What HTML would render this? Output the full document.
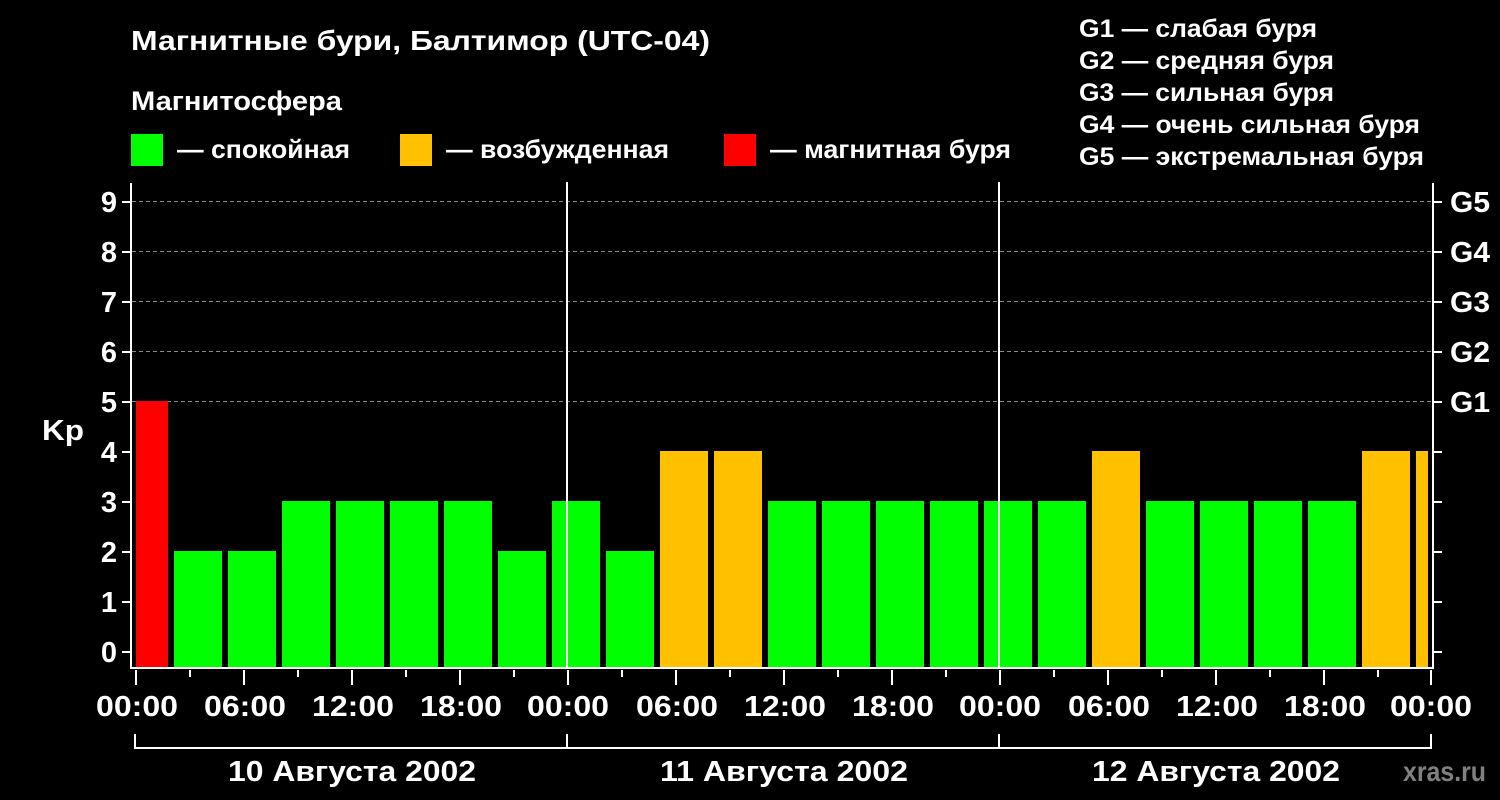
<!DOCTYPE html>
<html><head><meta charset="utf-8"><style>
html,body{margin:0;padding:0;background:#000;width:1500px;height:800px;overflow:hidden}
svg{display:block}
text{font-family:"Liberation Sans",Arial,sans-serif;font-weight:bold;fill:#fff}
</style></head><body>
<svg width="1500" height="800" viewBox="0 0 1500 800" xmlns="http://www.w3.org/2000/svg">
<rect width="1500" height="800" fill="#000"/>
<text x="131" y="50" font-size="28" textLength="579" lengthAdjust="spacingAndGlyphs">Магнитные бури, Балтимор (UTC-04)</text>
<text x="131" y="110" font-size="27" textLength="211" lengthAdjust="spacingAndGlyphs">Магнитосфера</text>
<rect x="131" y="134" width="32" height="32" fill="#00ff00"/>
<text x="177" y="158" font-size="26" textLength="173" lengthAdjust="spacingAndGlyphs">— спокойная</text>
<rect x="400" y="134" width="32" height="32" fill="#ffc000"/>
<text x="446" y="158" font-size="26" textLength="223" lengthAdjust="spacingAndGlyphs">— возбужденная</text>
<rect x="724" y="134" width="32" height="32" fill="#ff0000"/>
<text x="770" y="158" font-size="26" textLength="241" lengthAdjust="spacingAndGlyphs">— магнитная буря</text>
<g font-size="25">
<text x="1079" y="37" textLength="238" lengthAdjust="spacingAndGlyphs">G1 — слабая буря</text>
<text x="1079" y="69" textLength="255" lengthAdjust="spacingAndGlyphs">G2 — средняя буря</text>
<text x="1079" y="101" textLength="255" lengthAdjust="spacingAndGlyphs">G3 — сильная буря</text>
<text x="1079" y="133" textLength="341" lengthAdjust="spacingAndGlyphs">G4 — очень сильная буря</text>
<text x="1079" y="165" textLength="345" lengthAdjust="spacingAndGlyphs">G5 — экстремальная буря</text>
</g>
<g stroke="#888" stroke-width="1" stroke-dasharray="4,3">
<line x1="132" y1="201.5" x2="1432" y2="201.5"/>
<line x1="132" y1="251.5" x2="1432" y2="251.5"/>
<line x1="132" y1="301.5" x2="1432" y2="301.5"/>
<line x1="132" y1="351.5" x2="1432" y2="351.5"/>
<line x1="132" y1="401.5" x2="1432" y2="401.5"/>
</g>
<rect x="136" y="401" width="32" height="266" fill="#ff0000"/>
<g fill="#00ff00">
<rect x="174" y="551" width="48" height="116"/>
<rect x="228" y="551" width="48" height="116"/>
<rect x="282" y="501" width="48" height="166"/>
<rect x="336" y="501" width="48" height="166"/>
<rect x="390" y="501" width="48" height="166"/>
<rect x="444" y="501" width="48" height="166"/>
<rect x="498" y="551" width="48" height="116"/>
<rect x="552" y="501" width="48" height="166"/>
<rect x="606" y="551" width="48" height="116"/>
<rect x="768" y="501" width="48" height="166"/>
<rect x="822" y="501" width="48" height="166"/>
<rect x="876" y="501" width="48" height="166"/>
<rect x="930" y="501" width="48" height="166"/>
<rect x="984" y="501" width="48" height="166"/>
<rect x="1038" y="501" width="48" height="166"/>
<rect x="1146" y="501" width="48" height="166"/>
<rect x="1200" y="501" width="48" height="166"/>
<rect x="1254" y="501" width="48" height="166"/>
<rect x="1308" y="501" width="48" height="166"/>
</g>
<g fill="#ffc000">
<rect x="660" y="451" width="48" height="216"/>
<rect x="714" y="451" width="48" height="216"/>
<rect x="1092" y="451" width="48" height="216"/>
<rect x="1362" y="451" width="48" height="216"/>
<rect x="1416" y="451" width="12" height="216"/>
</g>
<g stroke="#fff" stroke-width="2">
<line x1="567" y1="182" x2="567" y2="668"/>
<line x1="999" y1="182" x2="999" y2="668"/>
<polyline points="131,183 131,668 1433,668 1433,183" fill="none"/>
</g>
<g stroke="#fff" stroke-width="2">
<line x1="122" y1="652" x2="131" y2="652"/><line x1="122" y1="602" x2="131" y2="602"/>
<line x1="122" y1="552" x2="131" y2="552"/><line x1="122" y1="502" x2="131" y2="502"/>
<line x1="122" y1="452" x2="131" y2="452"/><line x1="122" y1="402" x2="131" y2="402"/>
<line x1="122" y1="352" x2="131" y2="352"/><line x1="122" y1="302" x2="131" y2="302"/>
<line x1="122" y1="252" x2="131" y2="252"/><line x1="122" y1="202" x2="131" y2="202"/>
<line x1="1433" y1="652" x2="1442" y2="652"/><line x1="1433" y1="602" x2="1442" y2="602"/>
<line x1="1433" y1="552" x2="1442" y2="552"/><line x1="1433" y1="502" x2="1442" y2="502"/>
<line x1="1433" y1="452" x2="1442" y2="452"/><line x1="1433" y1="402" x2="1442" y2="402"/>
<line x1="1433" y1="352" x2="1442" y2="352"/><line x1="1433" y1="302" x2="1442" y2="302"/>
<line x1="1433" y1="252" x2="1442" y2="252"/><line x1="1433" y1="202" x2="1442" y2="202"/>
</g>
<g font-size="29" text-anchor="end">
<text x="117" y="662">0</text><text x="117" y="612">1</text><text x="117" y="562">2</text>
<text x="117" y="512">3</text><text x="117" y="462">4</text><text x="117" y="412">5</text>
<text x="117" y="362">6</text><text x="117" y="312">7</text><text x="117" y="262">8</text>
<text x="117" y="212">9</text>
</g>
<text x="42" y="440" font-size="29" textLength="42" lengthAdjust="spacingAndGlyphs">Kp</text>
<g font-size="29">
<text x="1450" y="412" textLength="40" lengthAdjust="spacingAndGlyphs">G1</text>
<text x="1450" y="362" textLength="40" lengthAdjust="spacingAndGlyphs">G2</text>
<text x="1450" y="312" textLength="40" lengthAdjust="spacingAndGlyphs">G3</text>
<text x="1450" y="262" textLength="40" lengthAdjust="spacingAndGlyphs">G4</text>
<text x="1450" y="212" textLength="40" lengthAdjust="spacingAndGlyphs">G5</text>
</g>
<g stroke="#fff" stroke-width="2">
<line x1="136" y1="670" x2="136" y2="685"/><line x1="190" y1="670" x2="190" y2="677"/>
<line x1="244" y1="670" x2="244" y2="685"/><line x1="298" y1="670" x2="298" y2="677"/>
<line x1="352" y1="670" x2="352" y2="685"/><line x1="406" y1="670" x2="406" y2="677"/>
<line x1="460" y1="670" x2="460" y2="685"/><line x1="514" y1="670" x2="514" y2="677"/>
<line x1="568" y1="670" x2="568" y2="685"/><line x1="622" y1="670" x2="622" y2="677"/>
<line x1="676" y1="670" x2="676" y2="685"/><line x1="730" y1="670" x2="730" y2="677"/>
<line x1="784" y1="670" x2="784" y2="685"/><line x1="838" y1="670" x2="838" y2="677"/>
<line x1="892" y1="670" x2="892" y2="685"/><line x1="946" y1="670" x2="946" y2="677"/>
<line x1="1000" y1="670" x2="1000" y2="685"/><line x1="1054" y1="670" x2="1054" y2="677"/>
<line x1="1108" y1="670" x2="1108" y2="685"/><line x1="1162" y1="670" x2="1162" y2="677"/>
<line x1="1216" y1="670" x2="1216" y2="685"/><line x1="1270" y1="670" x2="1270" y2="677"/>
<line x1="1324" y1="670" x2="1324" y2="685"/><line x1="1378" y1="670" x2="1378" y2="677"/>
<line x1="1431" y1="670" x2="1431" y2="685"/>
<polyline points="135,734 135,748 1431,748 1431,734" fill="none"/>
<line x1="567" y1="734" x2="567" y2="748"/><line x1="999" y1="734" x2="999" y2="748"/>
</g>
<g font-size="29" text-anchor="middle">
<text x="137" y="716" textLength="82" lengthAdjust="spacingAndGlyphs">00:00</text>
<text x="245" y="716" textLength="82" lengthAdjust="spacingAndGlyphs">06:00</text>
<text x="353" y="716" textLength="82" lengthAdjust="spacingAndGlyphs">12:00</text>
<text x="461" y="716" textLength="82" lengthAdjust="spacingAndGlyphs">18:00</text>
<text x="568" y="716" textLength="82" lengthAdjust="spacingAndGlyphs">00:00</text>
<text x="677" y="716" textLength="82" lengthAdjust="spacingAndGlyphs">06:00</text>
<text x="785" y="716" textLength="82" lengthAdjust="spacingAndGlyphs">12:00</text>
<text x="893" y="716" textLength="82" lengthAdjust="spacingAndGlyphs">18:00</text>
<text x="1000" y="716" textLength="82" lengthAdjust="spacingAndGlyphs">00:00</text>
<text x="1109" y="716" textLength="82" lengthAdjust="spacingAndGlyphs">06:00</text>
<text x="1217" y="716" textLength="82" lengthAdjust="spacingAndGlyphs">12:00</text>
<text x="1325" y="716" textLength="82" lengthAdjust="spacingAndGlyphs">18:00</text>
<text x="1431" y="716" textLength="82" lengthAdjust="spacingAndGlyphs">00:00</text>
<text x="352" y="781" textLength="248" lengthAdjust="spacingAndGlyphs">10 Августа 2002</text>
<text x="784" y="781" textLength="248" lengthAdjust="spacingAndGlyphs">11 Августа 2002</text>
<text x="1216" y="781" textLength="248" lengthAdjust="spacingAndGlyphs">12 Августа 2002</text>
</g>
<text x="1403" y="781" font-size="28" textLength="83" lengthAdjust="spacingAndGlyphs" style="fill:#808080">xras.ru</text>
</svg>
</body></html>
